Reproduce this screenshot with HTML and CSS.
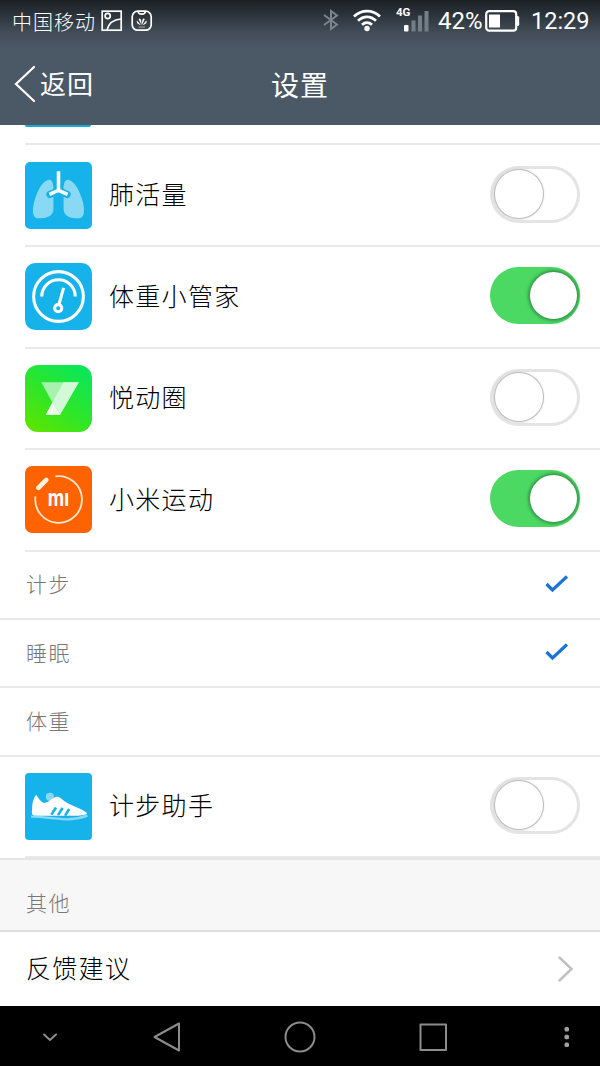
FILE: index.html
```
<!DOCTYPE html>
<html lang="zh-CN">
<head>
    <meta charset="UTF-8">
    <meta name="viewport" content="width=device-width, initial-scale=1.0">
    <title>设置</title>
    <link rel="stylesheet" href="styles.css">
</head>
<body>

    <header class="header">
        <div class="status-bar">
            <span class="carrier">中国移动</span>
            <svg class="icon-picture" width="22" height="22" viewBox="0 0 22 22">
                <rect x="1.200" y="1.200" width="19" height="19"/>
                <circle cx="6.700" cy="6" r="2.600"/>
                <path d="M6 20C7.500 14 12.500 9.500 20 9"/>
            </svg>
            <svg class="icon-app" width="22" height="22" viewBox="0 0 22 22">
                <rect x="1.200" y="1.200" width="19" height="19" rx="5.500"/>
                <path d="M7 1.500C7.500 5 14 5 14.500 1.500"/>
                <path class="petals" d="M10.500 15L7.600 9Q10.500 6.500 10.500 15M10.900 15L13.800 9Q10.900 6.500 10.900 15M10 15.200L6 10.500Q4.500 13.500 10 15.200M11.400 15.200L15.400 10.500Q16.900 13.500 11.400 15.200"/>
                <path class="caption" d="M7.500 17H14"/>
            </svg>
            <div class="status-right">
                <svg class="icon-bluetooth" width="18" height="22" viewBox="0 0 18 22">
                    <path d="M2 6L15 15.500L9 20V2L15 6.500L2 16"/>
                </svg>
                <svg class="icon-wifi" width="30" height="24" viewBox="0 0 30 24">
                    <path d="M2 8.500C9.500 1.300 20.500 1.300 28 8.500M6 12.700C11.500 7.500 18.500 7.500 24 12.700M10 16.700C13 14 17 14 20 16.700"/>
                    <circle cx="15" cy="20.500" r="2.700"/>
                </svg>
                <svg class="icon-signal" width="34" height="26" viewBox="0 0 34 26">
                    <text x="0" y="10">4G</text>
                    <rect x="8" y="19" width="4.500" height="6.500" rx="1"/>
                    <path d="M15.500 14.500h4v11h-4zM22 9.500h4v16h-4zM28.500 5H32.500v20.500h-4z"/>
                </svg>
                <span class="battery-text">42%</span>
                <svg class="icon-battery" width="35" height="22" viewBox="0 0 35 22">
                    <rect class="case" x="1.200" y="1.200" width="30" height="19.500" rx="3"/>
                    <path d="M31.500 6h1.200q1.500 0 1.500 1.500v7q0 1.500-1.500 1.500h-1.200z"/>
                    <rect x="4" y="4.500" width="11" height="13"/>
                </svg>
                <span class="clock">12:29</span>
            </div>
        </div>
        <nav class="title-bar">
            <a class="back">
                <svg width="24" height="38" viewBox="0 0 24 38">
                    <path d="M21 2L3 19L21 36"/>
                </svg>
                <span>返回</span>
            </a>
            <h1 class="title">设置</h1>
        </nav>
    </header>

    <main class="list">
        <div class="peek"><div class="peek-icon"></div></div>

        <div class="row">
            <svg class="app-icon" viewBox="0 0 66 66">
                <rect class="bg-blue" width="66" height="66" rx="5"/>
                <path class="lung" d="M22 18C26 16 28 20 28 26V46C28 53 22 55.500 13 55.500C6.500 55.500 7 45 10 36C13 27 17 20 22 18ZM44 18C40 16 38 20 38 26V46C38 53 44 55.500 53 55.500C59.500 55.500 59 45 56 36C53 27 49 20 44 18Z"/>
                <path class="pipe-edge" d="M33 12V28L24.500 32M33 28L41.500 32"/>
                <path class="pipe" d="M33 9V28L24 32M33 28L42 32"/>
            </svg>
            <span class="name">肺活量</span>
            <div class="toggle"><div class="knob"></div></div>
        </div>

        <div class="row">
            <svg class="app-icon" viewBox="0 0 66 66">
                <rect class="bg-blue" width="66" height="66" rx="10"/>
                <g class="gauge">
                    <circle cx="33" cy="33" r="24.500"/>
                    <path d="M16.500 33A16.500 16.500 0 0 1 49.500 33M38 24.500L33.700 40"/>
                    <circle cx="32.700" cy="44.500" r="3.500"/>
                </g>
            </svg>
            <span class="name">体重小管家</span>
            <div class="toggle on"><div class="knob"></div></div>
        </div>

        <div class="row">
            <svg class="app-icon" viewBox="0 0 66 66">
                <defs>
                    <linearGradient id="green" x1="0.150" y1="1" x2="0.850" y2="0">
                        <stop offset="0" stop-color="#5ce500"/>
                        <stop offset="0.500" stop-color="#2be62c"/>
                        <stop offset="1" stop-color="#09e65c"/>
                    </linearGradient>
                </defs>
                <rect fill="url(#green)" width="66" height="66" rx="13"/>
                <path class="fold-a" d="M16 17H53L34.500 49H20.500L27 37Z"/>
                <path class="fold-b" d="M38 17H53L34.500 49L27 37Z"/>
                <path class="fold-c" d="M27 37L34.500 49H20.500Z"/>
            </svg>
            <span class="name">悦动圈</span>
            <div class="toggle"><div class="knob"></div></div>
        </div>

        <div class="row">
            <svg class="app-icon" viewBox="0 0 66 66">
                <rect class="bg-orange" width="66" height="66" rx="7"/>
                <path class="ring" d="M30 10.200A23 23 0 1 1 10.300 30"/>
                <path class="band" d="M13.200 21.500L21 13.700"/>
                <text class="mi" x="22.500" y="39.500" textLength="21" lengthAdjust="spacingAndGlyphs">mı</text>
            </svg>
            <span class="name">小米运动</span>
            <div class="toggle on"><div class="knob"></div></div>
        </div>

        <div class="option">
            <span>计步</span>
            <svg class="check" width="24" height="20" viewBox="0 0 24 20"><path d="M1.500 10L7.500 16L22 2.500"/></svg>
        </div>
        <div class="option">
            <span>睡眠</span>
            <svg class="check" width="24" height="20" viewBox="0 0 24 20"><path d="M1.500 10L7.500 16L22 2.500"/></svg>
        </div>
        <div class="option">
            <span>体重</span>
        </div>

        <div class="row">
            <svg class="app-icon" viewBox="0 0 66 66">
                <rect class="bg-blue" width="66" height="66" rx="4"/>
                <circle class="lung" cx="24.500" cy="23.500" r="4"/>
                <path class="shoe" d="M11 21.500C14 26 16 29 19 29.500C23 29.500 27 24.500 31 23.500C34 23 35 25 38 27C44 32 57 35 61 39.500C61.500 41 57 42 52 42H10C6.500 42 6.500 39 7 36C7 31 8 25 11 21.500Z"/>
                <path class="stripes" d="M30.500 34L26 41M37 34.500L32.500 41.500M43.500 35.500L39.500 42"/>
                <path class="sole" d="M6 43C18 43 24 44.500 33 45C43 46.500 53 45 61.500 42"/>
            </svg>
            <span class="name">计步助手</span>
            <div class="toggle"><div class="knob"></div></div>
        </div>

        <h2 class="section">其他</h2>

        <div class="link">
            <span>反馈建议</span>
            <svg width="18" height="28" viewBox="0 0 18 28"><path d="M2.500 2.500L14.500 14L2.500 25.500"/></svg>
        </div>
    </main>

    <footer class="nav-bar">
        <svg width="600" height="60" viewBox="0 0 600 60">
            <path d="M44 28.500L50 34L56 28.500"/>
            <path d="M179 17.500V44.500L154.500 31Z"/>
            <circle cx="300" cy="31" r="14.500"/>
            <rect x="420.500" y="18.500" width="25.500" height="25.500"/>
            <g class="dots">
                <rect x="564.500" y="21" width="4.500" height="4.500" rx="1.500"/>
                <rect x="564.500" y="28.800" width="4.500" height="4.500" rx="1.500"/>
                <rect x="564.500" y="36.600" width="4.500" height="4.500" rx="1.500"/>
            </g>
        </svg>
    </footer>

</body>
</html>
```
FILE: styles.css
```
* {
    margin: 0;
    padding: 0;
    box-sizing: border-box;
}

body {
    width: 600px;
    height: 1066px;
    overflow: hidden;
    display: flex;
    flex-direction: column;
    background: #fff;
    color: #000;
    font-family: KaiTi, "Noto Sans CJK SC", sans-serif;
    font-weight: 300;
}

svg {
    display: block;
    flex-shrink: 0;
    fill: none;
}

/* Header */
.header {
    height: 125px;
    flex-shrink: 0;
    color: #fff;
    background: linear-gradient(#1b2024 0, #2c343b 15px, #414c57 32px, #4b5865 48px);
}

.status-bar {
    height: 42px;
    display: flex;
    align-items: center;
    padding: 0 11px 0 12px;
}

.carrier {
    font-size: 20px;
    letter-spacing: 1px;
    width: 89px;
    white-space: nowrap;
}

.icon-picture,
.icon-app {
    stroke: #fff;
    stroke-width: 1.7;
    margin-right: 8px;
}

.icon-app .petals {
    fill: #fff;
    stroke: none;
}

.icon-app .caption {
    stroke-width: 0.8;
    opacity: 0.7;
}

.status-right {
    margin-left: auto;
    display: flex;
    align-items: center;
    font-family: Roboto, sans-serif;
    font-weight: 400;
}

.icon-bluetooth {
    stroke: #7b848c;
    stroke-width: 2;
    margin: -2px 12px 0 0;
}

.icon-wifi {
    fill: #fff;
    margin: -2px 14px 0 0;
}

.icon-wifi path {
    fill: none;
    stroke: #fff;
    stroke-width: 2.8;
}

.icon-signal {
    fill: #fff;
    margin: -5px 8px 0 0;
}

.icon-signal path {
    fill: #747e87;
}

.icon-signal text {
    font-size: 11.5px;
    font-weight: 700;
}

.battery-text {
    font-size: 24px;
    width: 47px;
    white-space: nowrap;
}

.icon-battery {
    fill: #fff;
    margin-right: 11px;
}

.icon-battery .case {
    fill: none;
    stroke: #fff;
    stroke-width: 2.2;
}

.clock {
    font-size: 23.5px;
    width: 58px;
    white-space: nowrap;
}

.title-bar {
    height: 83px;
    display: grid;
    grid-template-columns: 1fr auto 1fr;
    align-items: center;
}

.back {
    display: flex;
    align-items: center;
    padding-left: 13px;
    font-size: 26px;
    font-weight: 400;
    letter-spacing: 1px;
}

.back svg {
    stroke: #fff;
    stroke-width: 2.2;
    stroke-linecap: round;
    margin-right: 3px;
}

.back span {
    margin-top: -2px;
}

.title {
    font-size: 28px;
    font-weight: 400;
    letter-spacing: 1px;
}

/* Settings list */
.list {
    height: 881px;
    flex-shrink: 0;
}

.peek {
    height: 20.4px;
    margin-left: 25px;
    border-bottom: 2px solid #e9e9e9;
}

.peek-icon {
    width: 66px;
    height: 2px;
    background: #18a9d9;
    border-radius: 0 0 5px 5px;
}

.row {
    height: 101.6px;
    margin-left: 25px;
    padding-right: 20px;
    display: flex;
    align-items: center;
    border-bottom: 2px solid #e9e9e9;
}

.app-icon {
    width: 67px;
    height: 67px;
    margin-right: 17px;
}

.name {
    flex: 1;
    margin-top: -4px;
    font-size: 25px;
    letter-spacing: 1.3px;
}

.bg-blue {
    fill: #16b3ea;
}

.bg-orange {
    fill: #ff6300;
}

.lung {
    fill: #8ad9f4;
}

.pipe-edge,
.pipe {
    stroke: #16b3ea;
    stroke-width: 7;
    stroke-linecap: round;
}

.pipe {
    stroke: #fff;
    stroke-width: 3.5;
    stroke-linecap: butt;
}

.gauge {
    stroke: #fff;
    stroke-width: 3;
}

.fold-a {
    fill: #a8f3ac;
}

.fold-b {
    fill: #d3f9d8;
}

.fold-c {
    fill: #eefdec;
}

.ring {
    stroke: #ffe7cf;
    stroke-width: 1.8;
}

.band {
    stroke: #fff4e4;
    stroke-width: 4.6;
    stroke-linecap: round;
}

.mi {
    fill: #fff;
    font-family: Inter, sans-serif;
    font-size: 22px;
    font-weight: 700;
}

.shoe {
    fill: #fff;
}

.stripes {
    stroke: #16b3ea;
    stroke-width: 2.6;
}

.sole {
    stroke: #8ad9f4;
    stroke-width: 2.2;
}

.toggle {
    width: 90px;
    height: 57px;
    padding: 4px 5px;
    margin-bottom: 2px;
    display: flex;
    border-radius: 29px;
    background: #fff;
    box-shadow: inset 0 0 0 3px #e4e4e4;
}

.knob {
    width: 48px;
    height: 48px;
    border-radius: 50%;
    background: #fff;
    box-shadow: 0 0 0 1px #bdbdbd, -1px 0 2px 2px #dedede;
}

.toggle.on {
    justify-content: flex-end;
    padding: 5px 3px;
    background: #4bd863;
    box-shadow: none;
}

.on .knob {
    width: 47px;
    height: 47px;
    box-shadow: 0 0 3px 2px #35984a;
}

.option {
    height: 68.3px;
    padding: 0 31px 0 26px;
    display: flex;
    align-items: center;
    justify-content: space-between;
    border-bottom: 2px solid #e9e9e9;
    color: #777;
    font-size: 21px;
    letter-spacing: 1.5px;
}

.option span {
    margin-top: -3px;
}

.check {
    stroke: #1c74d4;
    stroke-width: 3.2;
    margin-bottom: 2px;
}

.section {
    height: 73.5px;
    padding: 22px 26px 0;
    border-top: 2px solid #e5e5e5;
    border-bottom: 2px solid #dedede;
    background: #f7f7f7;
    color: #777;
    font-size: 21px;
    line-height: 40px;
    font-weight: 300;
    letter-spacing: 1.5px;
}

.link {
    height: 74px;
    padding: 0 25px 0 26px;
    display: flex;
    align-items: center;
    justify-content: space-between;
    font-size: 25px;
    letter-spacing: 1.3px;
}

.link span {
    margin-top: -3px;
}

.link svg {
    stroke: #c0c0c0;
    stroke-width: 2.5;
    stroke-linecap: round;
}

/* Android navigation bar */
.nav-bar {
    height: 60px;
    background: #000;
}

.nav-bar svg {
    stroke: #8c8c8c;
    stroke-width: 2;
    stroke-linejoin: round;
    stroke-linecap: round;
}

.nav-bar .dots {
    fill: #a0a0a0;
    stroke: none;
}
```
